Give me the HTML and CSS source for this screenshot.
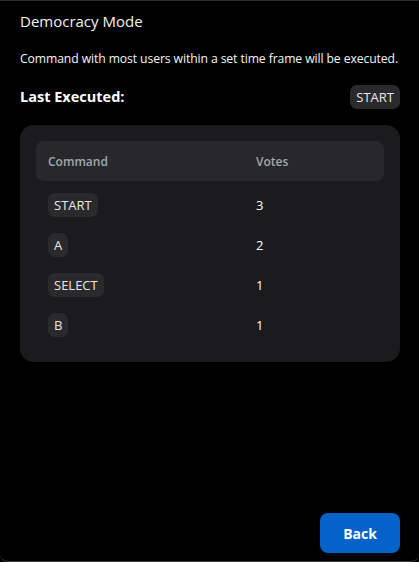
FILE: index.html
```html
<!DOCTYPE html>
<html>
<head>
<meta charset="utf-8">
<link rel="stylesheet" href="styles.css">
</head>
<body>
<div class="window">
  <h1 class="title">Democracy Mode</h1>
  <p class="desc">Command with most users within a set time frame will be executed.</p>
  <div class="last">
    <span class="last-label">Last Executed:</span>
    <span class="badge">START</span>
  </div>
  <div class="card">
    <div class="thead">
      <span class="col-cmd">Command</span>
      <span class="col-votes">Votes</span>
    </div>
    <div class="row"><span class="col-cmd"><span class="badge">START</span></span><span class="col-votes">3</span></div>
    <div class="row"><span class="col-cmd"><span class="badge">A</span></span><span class="col-votes">2</span></div>
    <div class="row"><span class="col-cmd"><span class="badge">SELECT</span></span><span class="col-votes">1</span></div>
    <div class="row"><span class="col-cmd"><span class="badge">B</span></span><span class="col-votes">1</span></div>
  </div>
  <div class="spacer"></div>
  <div class="footer">
    <button class="back">Back</button>
  </div>
</div>
</body>
</html>
```

FILE: styles.css
```css
html, body {
  margin: 0;
  padding: 0;
  background: #000;
}
body {
  font-family: "Open Sans", "Noto Sans", sans-serif;
  color: #fff;
}
.window {
  box-sizing: border-box;
  width: 419px;
  height: 562px;
  border-top: 1px solid #2c2c2c;
  border-bottom: 1px solid #3a3a3a;
  border-radius: 0 0 8px 8px;
  display: flex;
  flex-direction: column;
  padding: 0 19px 0 20px;
}
.title {
  margin: 10px 0 0;
  font-size: 15px;
  font-weight: 400;
  line-height: 20px;
  color: #f2f2f2;
}
.desc {
  margin: 19px 0 0;
  font-size: 12.2px;
  line-height: 18px;
  color: #f4f4f4;
  white-space: nowrap;
  letter-spacing: -0.1px;
}
.last {
  margin-top: 16px;
  display: flex;
  align-items: center;
  justify-content: space-between;
  height: 25px;
}
.last-label {
  font-size: 14.5px;
  font-weight: 700;
}
.badge {
  display: inline-flex;
  align-items: center;
  height: 24px;
  padding: 0 6px;
  border-radius: 7px;
  background: #2a2a2c;
  color: #e8e8ea;
  font-size: 13px;
  box-sizing: border-box;
}
.card {
  margin-top: 16px;
  background: #1b1b1d;
  border-radius: 14px;
  padding: 16px 16px 17px;
}
.thead {
  display: flex;
  align-items: center;
  height: 40px;
  background: #28282a;
  border-radius: 8px;
  padding: 0 12px;
  color: #a4a6ad;
  font-size: 12px;
  font-weight: 600;
}
.row {
  display: flex;
  align-items: center;
  height: 40px;
  padding: 0 12px;
  font-size: 13px;
}
.thead + .row {
  margin-top: 4px;
}
.col-cmd {
  width: 208px;
}
.col-votes {
  flex: 1;
}
.spacer {
  flex: 1;
}
.footer {
  display: flex;
  justify-content: flex-end;
  padding-bottom: 8px;
}
.back {
  width: 80px;
  height: 40px;
  border: none;
  border-radius: 8px;
  background: #0562c8;
  color: #fff;
  font-family: inherit;
  font-size: 14px;
  font-weight: 700;
}
```
